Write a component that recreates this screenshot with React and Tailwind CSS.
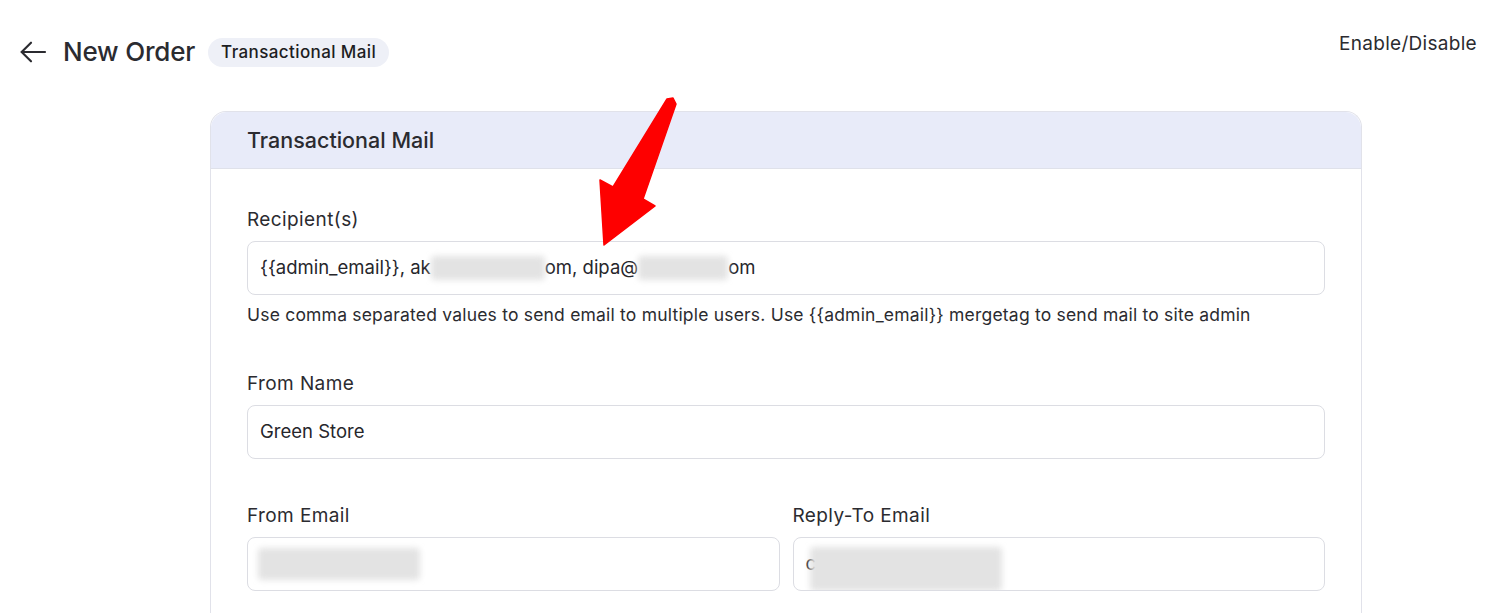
import React from 'react';

function Blur({ className }) {
    return (
        <span
            className={`inline-block align-middle rounded-sm bg-[#e3e3e3] blur-[3px] ${className}`}
        />
    );
}

function Field({ label, children, className = '' }) {
    return (
        <div className={`flex flex-col ${className}`}>
            <label className="mb-[9px] text-[19px] leading-[24px] tracking-[0.4px] text-[#2b2b30]">{label}</label>
            {children}
        </div>
    );
}

function Box({ children }) {
    return (
        <div className="flex h-[54px] items-center overflow-hidden rounded-lg border border-[#dcdde3] bg-white px-[12px] text-[18.5px] text-[#26262b]">
            {children}
        </div>
    );
}

export default function App() {
    return (
        <div className="relative min-h-[613px] overflow-hidden bg-white font-['Inter',sans-serif] text-[#2b2b30]">
            {/* Top bar */}
            <header className="flex items-start justify-between pl-[17px] pr-[15px] pt-[36px]">
                <div className="flex items-center">
                    <svg width="32" height="32" viewBox="0 0 24 24" fill="none" stroke="#2b2b30" strokeWidth="1.6" strokeLinecap="round" strokeLinejoin="round">
                        <path d="M21 12H3.5" />
                        <path d="M10.5 5l-7 7 7 7" />
                    </svg>
                    <h1 className="ml-[14px] text-[26px] font-medium leading-[32px] tracking-[-0.2px]">New Order</h1>
                    <span className="ml-[13px] rounded-full bg-[#eef0f7] px-[13px] py-[4px] text-[17px] font-medium leading-[21px] tracking-[0.4px] text-[#1d1d22]">
                        Transactional Mail
                    </span>
                </div>
                <div className="text-[19px] leading-[16px] tracking-[0.3px] text-[#2b2b30]">Enable/Disable</div>
            </header>

            {/* Card */}
            <section className="ml-[210px] mt-[43px] w-[1152px] rounded-t-2xl border border-b-0 border-[#e1e2ea]">
                <div className="flex h-[56px] items-center rounded-t-2xl bg-[#e8ebf9] px-[36px] text-[21.5px] font-medium text-[#2b2b30]">
                    Transactional Mail
                </div>
                <div className="border-t border-[#dfe1ea] px-[36px] pt-[39px] pb-[30px]">
                    <Field label="Recipient(s)">
                        <Box>
                            <span className="whitespace-nowrap">{'{{admin_email}}'}, ak</span>
                            <Blur className="h-[24px] w-[114px]" />
                            <span className="whitespace-nowrap">om, dipa@</span>
                            <Blur className="h-[24px] w-[90px]" />
                            <span>om</span>
                        </Box>
                    </Field>
                    <p className="mt-[10px] text-[17.5px] leading-[20px] tracking-[0.2px] text-[#2b2b30]">
                        Use comma separated values to send email to multiple users. Use {'{{admin_email}}'} mergetag to send mail to site admin
                    </p>

                    <Field label="From Name" className="mt-[47px]">
                        <Box>Green Store</Box>
                    </Field>

                    <div className="mt-[45px] grid grid-cols-2 gap-[13px]">
                        <Field label="From Email">
                            <Box>
                                <Blur className="ml-[-2px] h-[32px] w-[162px]" />
                            </Box>
                        </Field>
                        <Field label="Reply-To Email">
                            <Box>
                                <span>c</span>
                                <Blur className="ml-[-6px] mt-[10px] h-[44px] w-[192px]" />
                            </Box>
                        </Field>
                    </div>
                </div>
            </section>

            {/* Red annotation arrow */}
            <svg className="pointer-events-none absolute left-0 top-0" width="1492" height="613">
                <polygon
                    points="667,99 673,98 676,104 643,199 655,206 604,245 600,180 613,187"
                    fill="#fe0000"
                    stroke="#fe0000"
                    strokeWidth="1.5"
                    strokeLinejoin="round"
                />
            </svg>
        </div>
    );
}
